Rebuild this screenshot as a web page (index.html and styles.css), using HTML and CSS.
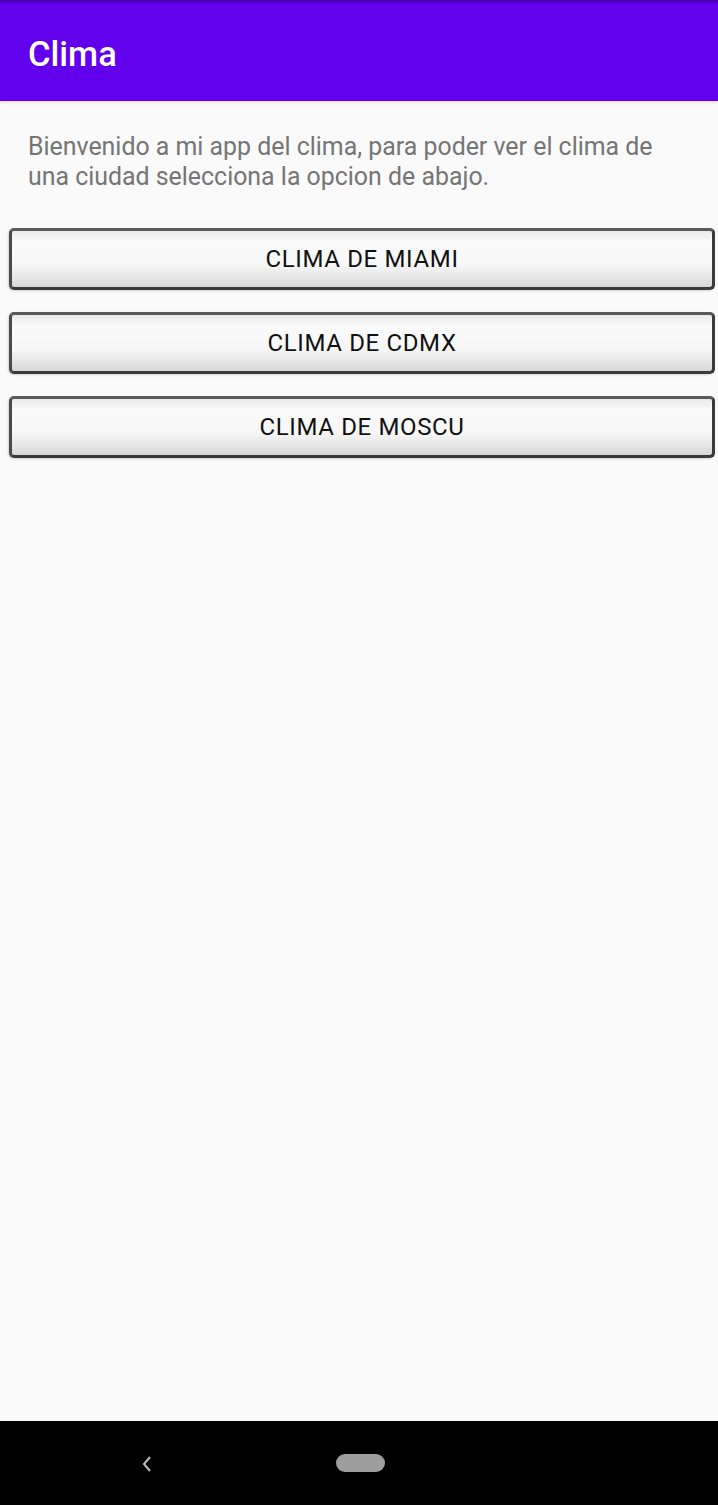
FILE: index.html
```html
<!DOCTYPE html>
<html lang="es">
<head>
<meta charset="utf-8">
<link rel="stylesheet" href="styles.css">
<title>Clima</title>
</head>
<body>
<div class="screen">
  <header class="appbar">
    <div class="statusbar"></div>
    <h1 class="title">Clima</h1>
  </header>
  <main class="content">
    <p class="intro">Bienvenido a mi app del clima, para poder ver el clima de una ciudad selecciona la opcion de abajo.</p>
    <div class="buttons">
      <button class="btn">CLIMA DE MIAMI</button>
      <button class="btn">CLIMA DE CDMX</button>
      <button class="btn">CLIMA DE MOSCU</button>
    </div>
  </main>
  <nav class="navbar">
    <svg class="back" width="14" height="20" viewBox="0 0 14 20"><path d="M10 3 L4 10 L10 17" fill="none" stroke="#bdbdbd" stroke-width="2"/></svg>
    <span class="home"></span>
  </nav>
</div>
</body>
</html>
```
FILE: styles.css
```css
* { box-sizing: border-box; }
html, body { margin: 0; padding: 0; }
body {
  font-family: Roboto, "Liberation Sans", sans-serif;
  background: #fafafa;
}
.screen {
  width: 718px;
  height: 1505px;
  display: flex;
  flex-direction: column;
}
.appbar {
  height: 101px;
  background: #6200ee;
  display: flex;
  flex-direction: column;
  box-shadow: 0 1px 3px rgba(0,0,0,0.15);
}
.statusbar {
  height: 4px;
  background: linear-gradient(#3f00a0, #6200ee);
}
.title {
  margin: 0;
  padding: 28px 0 0 28px;
  color: #fff;
  font-size: 34.5px;
  font-weight: 500;
  line-height: 44px;
}
.content {
  flex: 1;
  padding-top: 31px;
}
.intro {
  margin: 0 24px 0 28px;
  color: #757575;
  font-size: 24.9px;
  line-height: 30px;
}
.buttons {
  display: flex;
  flex-direction: column;
  gap: 22px;
  margin: 36px 3px 0 9px;
}
.btn {
  height: 62px;
  border: 3px solid #3a3a3a;
  border-top-color: #5a5a5a;
  border-left-color: #4a4a4a;
  border-radius: 5px;
  background: linear-gradient(#e9e9e9 0%, #fafafa 20%, #f7f7f7 60%, #e4e4e4 85%, #d6d6d6 100%);
  font-family: Roboto, "Liberation Sans", sans-serif;
  font-size: 24px;
  font-weight: 400;
  color: #111;
  letter-spacing: 0.65px;
  padding: 0;
  box-shadow: -1px 1px 2px rgba(0,0,0,0.15);
}
.navbar {
  height: 84px;
  background: #000;
  display: flex;
  align-items: center;
}
.back {
  margin-left: 140px;
  margin-top: 2px;
}
.home {
  margin-left: 182px;
  width: 49px;
  height: 18px;
  border-radius: 9px;
  background: #9e9e9e;
}
```
